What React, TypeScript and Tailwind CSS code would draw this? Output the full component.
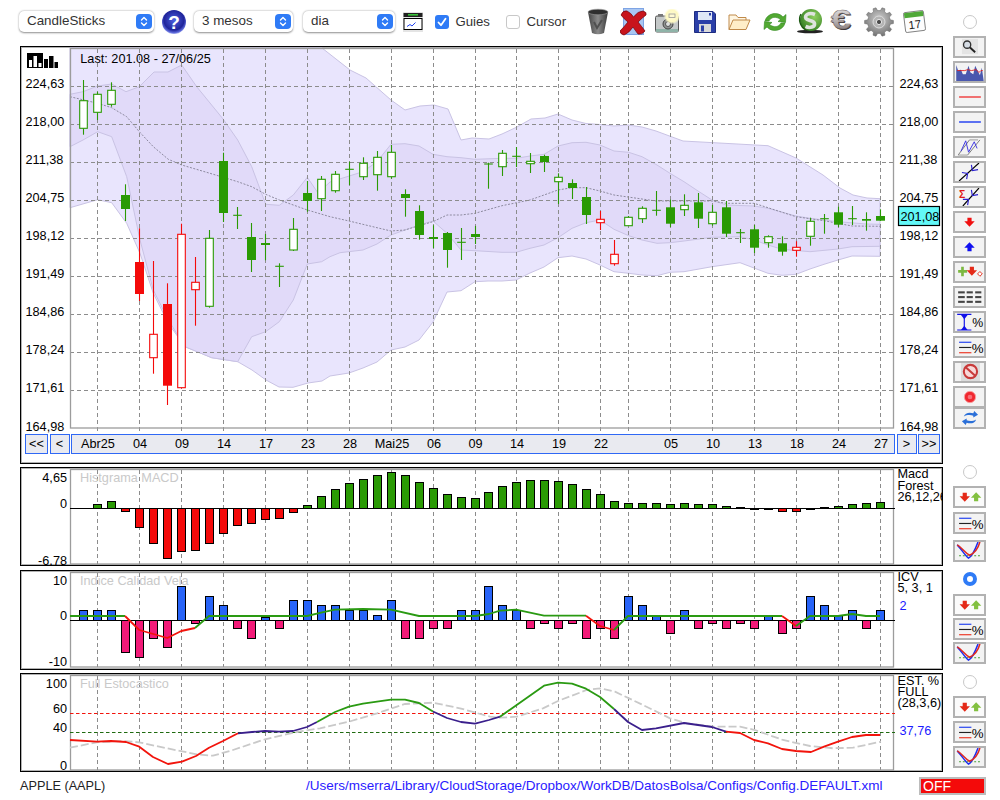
import type { ReactNode } from "react";

type Pt = [number, number];

const line = (pts: Pt[]) => pts.map((p, i) => `${i ? "L" : "M"}${p[0]} ${p[1]}`).join(" ");
const area = (top: Pt[], bottom: Pt[]) => `${line(top)} ${bottom.slice().reverse().map((p) => `L${p[0]} ${p[1]}`).join(" ")} Z`;

// 58 sessions, 14px apart, with the 1px slip the chart has after the 28th one
const barX = (i: number) => (i <= 28 ? 83.5 + 14 * i : 82.5 + 14 * i);
const GRID_X = [97.5, 139.5, 181.5, 223.5, 265.5, 307.5, 349.5, 391.5, 433.5, 475.5, 516.5, 558.5, 600.5, 628.5, 670.5, 712.5, 754.5, 796.5, 838.5, 880.5];
const GRID_Y = [86.5, 124.5, 162.5, 200.5, 238.5, 276.5, 314.5, 352.5, 390.5];
const PRICES = ["224,63", "218,00", "211,38", "204,75", "198,12", "191,49", "184,86", "178,24", "171,61", "164,98"];

// wick top, wick bottom, body top, body bottom, kind (g hollow, G filled, r, R, d doji)
const CANDLES: [number, number, number, number, string][] = [
  [80, 134.7, 100.7, 128.3, "g"], [91.7, 120, 94.3, 112.3, "g"], [82.3, 106.7, 90.3, 104.3, "g"], [184.3, 221, 195, 209, "G"],
  [228.3, 301, 262, 294, "R"], [261, 373.7, 334.3, 357.7, "r"], [283.3, 405, 304, 385.7, "R"], [223.7, 388.3, 234.3, 387.7, "r"],
  [257, 325.7, 282.3, 289.7, "r"], [230, 307.7, 238.3, 306.3, "g"], [152.7, 222, 161, 213, "G"], [207, 229, 215.3, 215.3, "d"],
  [223, 272, 237, 260, "G"], [234, 260.3, 243, 245, "G"], [263.3, 287, 266.3, 266.3, "d"], [218, 251, 229.3, 250, "g"],
  [181, 211.7, 193, 201, "G"], [176, 211, 179.3, 198.7, "g"], [171, 192.7, 174.3, 190.7, "g"], [161.7, 185, 169.3, 169.3, "d"],
  [157.3, 180, 163.3, 176.7, "g"], [151, 190.7, 157.3, 174.7, "g"], [145, 178.7, 152.3, 176.7, "g"], [189.3, 216.7, 194, 198, "G"],
  [205.3, 239.7, 211, 235, "G"], [225.3, 248, 237, 239, "G"], [232, 267.7, 233, 250, "G"], [228, 260, 242.3, 242.3, "d"],
  [226, 244, 234, 237, "G"], [162.7, 188.7, 164, 164, "d"], [150, 176, 153.3, 166.7, "g"], [147, 167, 156.3, 156.3, "d"],
  [153, 173, 161.3, 163.7, "g"], [154.7, 172, 156, 162, "G"], [173.3, 204, 177.3, 181.7, "g"], [179.3, 199, 183, 188, "G"],
  [187, 224, 197, 215, "G"], [211, 230, 219.3, 222.7, "r"], [240, 265.7, 254.3, 263.7, "r"], [216, 225.7, 217.3, 225.7, "g"],
  [206.3, 223, 208.3, 218.7, "g"], [191, 215.7, 210.3, 210.3, "d"], [199.7, 227, 207.3, 223.7, "G"], [194.3, 216, 205.3, 209.7, "g"],
  [193, 228, 202.3, 218.7, "G"], [205, 225.7, 212.3, 223.7, "g"], [201, 237, 207.3, 233.7, "G"], [229, 243, 232.7, 232.7, "d"],
  [225, 253, 229.3, 247.7, "G"], [235.3, 247.7, 236.7, 242.7, "g"], [236.3, 255.7, 243.3, 251.7, "G"], [241.3, 256.7, 247.3, 250.3, "r"],
  [217.7, 245.7, 221.3, 236.3, "g"], [214, 233.7, 218.7, 218.7, "d"], [206.7, 227, 212.3, 224.7, "G"], [206, 225, 218.7, 218.7, "d"],
  [212.3, 230.7, 219, 220.7, "G"], [209.3, 221, 216, 220.7, "G"],
];

const OUTER_TOP: Pt[] = [[70, 48], [322, 48], [350, 70], [366, 78], [391, 100], [405, 110], [420, 106], [434, 105], [448, 109], [461, 140], [472, 138], [489, 139], [502, 134], [517, 127], [531, 119], [545, 118], [558, 114], [572, 120], [586, 123.5], [600, 124.5], [614, 126], [628, 125], [642, 127], [656, 131], [683, 141], [768, 145.7], [796, 158], [823, 175], [840, 188], [853, 195], [867, 198], [880, 198.7]];
const OUTER_BOTTOM: Pt[] = [[70, 207.7], [97.7, 199.7], [111.7, 202.7], [126.7, 223.3], [140, 253.3], [153.3, 293.3], [168.3, 323.3], [185, 346.7], [211.7, 357.7], [237.7, 361.7], [252, 370], [266, 380], [279, 387], [293, 387.3], [308, 383], [322, 381], [330, 376], [349, 373], [363, 368], [377, 362], [391, 350], [405, 347], [419, 340], [433, 322], [447, 292], [461, 290.7], [475, 281.7], [488, 281], [502, 281], [516, 280], [530, 273], [544, 267], [558, 257.7], [572, 256], [586, 259], [600, 265], [614, 271.7], [628.7, 273.3], [642, 275], [657, 275.7], [670, 272.3], [684, 271.7], [712, 266.7], [740, 262.7], [754, 268], [768, 273.3], [782, 275.3], [796, 274.3], [810, 269], [824, 264.3], [838, 260], [852, 256], [880, 256.3]];
const INNER_TOP: Pt[] = [[70, 94.3], [83, 91.7], [97.7, 86], [111.7, 84], [126, 91.7], [139.3, 86.7], [154, 72], [168, 72], [181.7, 65], [196.7, 86.7], [223.3, 119.3], [237.7, 140], [251.7, 166.7], [265.7, 204.3], [279.3, 205.3], [293.3, 195], [307.3, 177.3], [318, 193], [330, 182], [363, 171.7], [377, 161.7], [391, 144.3], [405, 143.7], [419, 146], [433, 154.3], [447, 156.7], [461, 157.7], [475, 159.3], [502, 158.3], [516, 158.3], [530, 156], [544, 154.3], [558, 146], [572, 142.7], [586, 142.3], [600, 145], [614, 151], [628.7, 152.3], [642, 156.7], [657, 165], [670, 173.3], [684, 181.7], [698, 191], [712, 200], [726, 205], [754, 206], [768, 208.3], [796, 216], [810, 218.3], [838, 221.7], [866, 224], [880, 224.3]];
const INNER_BOTTOM: Pt[] = [[70, 146.7], [83, 140], [97.7, 131.7], [111.7, 136.7], [126.7, 176.7], [140, 240], [153.3, 290], [168.3, 320], [185, 346.7], [211.7, 357.7], [237.7, 361.7], [251.7, 336.7], [265.7, 331.7], [279.3, 321.7], [293.3, 300], [307.3, 264], [321.7, 261.7], [330, 256.7], [340, 252.7], [363, 250], [377, 244], [391, 235], [405, 230], [419, 225], [433, 221], [447, 233.3], [461, 250], [475, 250.7], [502, 252.3], [516, 252.3], [530, 248.3], [544, 245], [558, 237.7], [572, 228.3], [586, 222.7], [600, 220], [614, 229.3], [628.7, 235.7], [642, 240], [657, 243.3], [670, 242.7], [684, 241], [712, 237.3], [740, 236.7], [754, 240], [768, 245], [782, 249.3], [810, 251.7], [838, 249], [852, 246.7], [880, 246.3]];
const MID: Pt[] = [[70, 96.7], [97.7, 103.3], [111.7, 107.7], [126.7, 116.7], [139.3, 131.7], [153.3, 146.7], [168.3, 159.3], [181.7, 165], [210, 173.3], [237.7, 181.7], [251.7, 186.7], [265.7, 194.3], [279.3, 200], [307.3, 210], [330, 216.7], [349, 221], [377, 227.7], [391, 231], [405, 230], [419, 225.7], [433, 221.7], [447, 215], [461, 215], [475, 213.3], [502, 205.7], [530, 200], [558, 190], [572, 187.7], [586, 187.7], [600, 191], [614, 195], [642, 199], [656, 201], [712, 201], [726, 203.3], [754, 203.3], [768, 207.7], [796, 216.7], [824, 220.7], [852, 226], [880, 226.3]];

const MACD = [null, 504.3, 501.3, 511.7, 527.7, 543.7, 558.7, 551.7, 550.7, 543.7, 533.7, 525.7, 523.7, 519.7, 518.7, 512.7, 505.3, 496.3, 489.3, 483.3, 479.3, 475.3, 472.3, 475.3, 482.3, 488.3, 494.3, 497.3, 498.3, 492.3, 486.3, 482.3, 480.3, 480.3, 481.3, 484.3, 489.3, 494.3, 501.3, 503.3, 503.3, 503.3, 504.3, 503.3, 504.3, 504.3, 506.3, 507.3, 509.3, 509.3, 511.7, 511.7, 509.3, 507.3, 506.3, 504.3, 503.3, 502.3];
const ICV = [610.3, 610.3, 610.3, 652.3, 657.3, 638.3, 647.3, 586.3, 623.3, 596.3, 605.3, 628.3, 638.3, 617.3, 628.3, 600.3, 600.3, 605.3, 605.3, 610.3, 610.3, 615.3, 600.3, 638.3, 638.3, 628.3, 628.3, 610.3, 610.3, 586.3, 605.3, 610.3, 628.3, 623.3, 628.3, 623.3, 638.3, 628.3, 638.3, 596.3, 605.3, 615, 633.3, 610.3, 628.3, 623.3, 628.3, 623.3, 628.3, 615, 633.3, 628.3, 596.3, 605.3, 615, 610.3, 628.3, 610.3];

const ICV_LINES: { c: string; pts: Pt[] }[] = [
  { c: "#2a9a12", pts: [[70, 616], [125, 616]] },
  { c: "#f2140c", pts: [[125, 616], [139.3, 630], [153.3, 634], [167.3, 638], [181.3, 631], [195, 628]] },
  { c: "#2a9a12", pts: [[195, 628], [209, 616], [307, 616], [321, 612.7], [335, 609.7], [363, 609], [391, 609.7], [419, 616], [475, 616], [489, 614], [500, 610.7], [516, 609.7], [544, 615.7], [586, 615.7]] },
  { c: "#f2140c", pts: [[586, 615.7], [600, 626], [614, 630]] },
  { c: "#2a9a12", pts: [[614, 630], [628, 616], [782, 616]] },
  { c: "#f2140c", pts: [[782, 616], [796, 626]] },
  { c: "#2a9a12", pts: [[796, 626], [810, 616], [838, 616], [852, 614], [866, 616], [880, 616]] },
];

const STOCH_LINES: { c: string; pts: Pt[] }[] = [
  { c: "#f2140c", pts: [[70, 740], [97, 741.7], [111, 741], [126, 742], [139.3, 746.7], [153, 757], [168, 764], [182, 761.7], [196, 756], [209, 747.7], [223, 741], [238, 733.3]] },
  { c: "#3a1f8c", pts: [[238, 733.3], [252, 732], [265, 731], [279, 731.7], [293, 731], [307, 727], [317, 722]] },
  { c: "#2a9a12", pts: [[317, 722], [335, 712], [349, 706.7], [363, 703.7], [377, 701.7], [391, 699.7], [405, 699.7], [419, 703], [433, 711.5]] },
  { c: "#3a1f8c", pts: [[433, 711.5], [447, 718], [461, 722], [475, 723.7], [489, 720], [500, 716.7]] },
  { c: "#2a9a12", pts: [[500, 716.7], [544, 685.7], [558, 682.7], [572, 683.7], [586, 688.7], [600, 697], [614, 709]] },
  { c: "#3a1f8c", pts: [[614, 709], [628, 722], [642, 730], [656, 728.3], [684, 723], [712, 727], [726, 731.7]] },
  { c: "#f2140c", pts: [[726, 731.7], [740, 733], [754, 740], [768, 743.3], [782, 749], [796, 751], [811, 752], [824, 746.7], [838, 741.7], [852, 737], [866, 735], [880, 735]] },
];
const STOCH_SLOW: Pt[] = [[70, 747.7], [96.7, 742.3], [123, 741], [139, 742.3], [167, 748.3], [196.7, 754.3], [213, 755.7], [233, 750], [265, 739.3], [293, 732.7], [320, 728.3], [349, 721.7], [377, 713.3], [405, 704], [433, 702.7], [460, 708.3], [490, 716.7], [500, 717.7], [516.7, 716.7], [543, 708.3], [558, 701], [586.7, 690], [600, 688.3], [615, 691.7], [643, 705], [670, 718.3], [686.7, 723.3], [713, 726.7], [740, 726.7], [755, 730], [783, 740], [810, 746], [833, 748.3], [853, 747.7], [881, 741.7]];

const TICKS: { label: string; w: string }[] = [
  { label: "Abr25", w: "w-[42px]" }, { label: "04", w: "w-[42px]" }, { label: "09", w: "w-[42px]" }, { label: "14", w: "w-[42px]" }, { label: "17", w: "w-[42px]" },
  { label: "23", w: "w-[42px]" }, { label: "28", w: "w-[42px]" }, { label: "Mai25", w: "w-[42px]" }, { label: "06", w: "w-[42px]" }, { label: "09", w: "w-[41px]" },
  { label: "14", w: "w-[42px]" }, { label: "19", w: "w-[42px]" }, { label: "22", w: "w-[42px]" }, { label: "", w: "w-[28px]" }, { label: "05", w: "w-[42px]" },
  { label: "10", w: "w-[42px]" }, { label: "13", w: "w-[42px]" }, { label: "18", w: "w-[42px]" }, { label: "24", w: "w-[42px]" }, { label: "27", w: "w-[42px]" },
];

function gearPath(cx: number, cy: number, r1: number, r2: number, teeth: number) {
  const pts: string[] = [];
  for (let i = 0; i < teeth; i++) {
    const a = (i / teeth) * Math.PI * 2;
    const s = (Math.PI * 2) / teeth;
    [[-0.3, r1], [-0.17, r2], [0.17, r2], [0.3, r1]].forEach(([o, r]) => {
      const t = a + o * s;
      pts.push(`${(cx + Math.cos(t) * r).toFixed(2)} ${(cy + Math.sin(t) * r).toFixed(2)}`);
    });
  }
  return `M${pts.join(" L")} Z`;
}

function Ax({ x, y, children, end, className = "fill-black" }: { x: number; y: number; children: ReactNode; end?: boolean; className?: string }) {
  return (
    <text x={x} y={y} textAnchor={end ? "end" : "start"} className={`text-[12.7px] ${className}`}>
      {children}
    </text>
  );
}

function VGrid({ y1, y2 }: { y1: number; y2: number }) {
  return (
    <g stroke="#8c8c8c" strokeDasharray="4 3">
      {GRID_X.map((x) => (
        <line key={x} x1={x} x2={x} y1={y1} y2={y2} />
      ))}
    </g>
  );
}

function Candle({ x, c }: { x: number; c: (typeof CANDLES)[number] }) {
  const [wt, wb, bt, bb, kind] = c;
  const color = kind === "r" || kind === "R" ? "#f40a0a" : "#2a9a04";
  return (
    <g stroke={color}>
      <line x1={x} x2={x} y1={wt} y2={wb} strokeWidth={1.1} />
      {kind === "d" && <line x1={x - 4.3} x2={x + 4.3} y1={bt} y2={bt} strokeWidth={1.1} />}
      {(kind === "g" || kind === "r") && <rect x={x - 3.8} y={bt} width={7.6} height={bb - bt} fill="#fff" strokeWidth={1.1} />}
      {(kind === "G" || kind === "R") && <rect x={x - 4.5} y={bt} width={9} height={bb - bt} fill={color} stroke="none" />}
    </g>
  );
}

function Bar({ i, y, zero, up, down }: { i: number; y: number; zero: number; up: string; down: string }) {
  const top = Math.floor(y) + 0.5;
  return <rect x={barX(i) - 4} y={Math.min(top, zero)} width={8} height={Math.abs(top - zero)} fill={top > zero ? down : up} stroke="#000" />;
}

function MainChart() {
  return (
    <svg width={921} height={385} viewBox="21 47 921 385" className="block overflow-visible">
      <path d={area(OUTER_TOP, OUTER_BOTTOM)} fill="#e9e5fd" stroke="#c9c3e4" />
      <path d={area(INNER_TOP, INNER_BOTTOM)} fill="#e1daf9" stroke="#c9c3e4" />
      <path d={line(MID)} fill="none" stroke="#8d8a9f" strokeDasharray="2 1.5" />
      <g stroke="#8c8c8c" strokeDasharray="4 3">
        {GRID_Y.map((y) => (
          <line key={y} x1={70} x2={895} y1={y} y2={y} />
        ))}
      </g>
      <VGrid y1={49} y2={431} />
      <rect x={70.5} y={48.5} width={823} height={379.5} fill="none" stroke="#9c9c9c" strokeWidth={1.3} />
      {CANDLES.map((c, i) => (
        <Candle key={i} x={barX(i)} c={c} />
      ))}

      <g fill="#000">
        <rect x={27} y={53} width={16} height={15} />
        <rect x={44} y={59} width={4} height={9} />
        <rect x={49} y={56} width={4.5} height={12} />
        <rect x={54.5} y={62} width={3.5} height={6} />
      </g>
      <g fill="#fff">
        <rect x={29} y={60} width={3} height={7} />
        <rect x={33.5} y={56} width={3.5} height={11} />
        <rect x={38.5} y={63} width={3} height={4} />
      </g>
      <Ax x={80.3} y={63}>Last: 201.08 - 27/06/25</Ax>

      {PRICES.map((p, i) => (
        <Ax key={p} x={25.5} y={i === 9 ? 431 : 88 + 38 * i}>
          {p}
        </Ax>
      ))}
      {PRICES.map((p, i) => (
        <Ax key={p} x={899.5} y={i === 9 ? 431 : 88 + 38 * i}>
          {p}
        </Ax>
      ))}
      <rect x={898.5} y={206.5} width={41} height={19} fill="#62f8f8" stroke="#000" strokeWidth={1.2} />
      <Ax x={900.5} y={221}>201,08</Ax>
    </svg>
  );
}

function MacdChart() {
  return (
    <svg width={921} height={97} viewBox="21 468 921 97" className="block">
      <VGrid y1={470} y2={564} />
      <rect x={70.5} y={469.5} width={823} height={94.5} fill="none" stroke="#9c9c9c" strokeWidth={1.3} />
      <text x={80} y={481.5} className="text-[12.7px] fill-[#c9c9c9]">Histgrama MACD</text>
      {MACD.map((y, i) => (y === null ? null : <Bar key={i} i={i} y={y} zero={508.5} up="#2a9a04" down="#f40a0a" />))}
      <line x1={70} x2={895} y1={508.5} y2={508.5} stroke="#000" />
      <Ax x={67} y={481.5} end>4,65</Ax>
      <Ax x={67} y={507.5} end>0</Ax>
      <Ax x={67} y={564.5} end>-6,78</Ax>
      <Ax x={897.5} y={478}>Macd</Ax>
      <Ax x={897.5} y={489.5}>Forest</Ax>
      <Ax x={897.5} y={500.5}>26,12,26</Ax>
    </svg>
  );
}

function IcvChart() {
  return (
    <svg width={921} height={98} viewBox="21 571 921 98" className="block">
      <VGrid y1={573} y2={667} />
      <rect x={70.5} y={572.5} width={823} height={94.5} fill="none" stroke="#9c9c9c" strokeWidth={1.3} />
      <text x={80} y={585} className="text-[12.7px] fill-[#c9c9c9]">Indice Calidad Vela</text>
      {ICV.map((y, i) => (
        <Bar key={i} i={i} y={y} zero={620.5} up="#2864f8" down="#f21a78" />
      ))}
      <line x1={70} x2={895} y1={620.5} y2={620.5} stroke="#000" />
      {ICV_LINES.map((l, i) => (
        <path key={i} d={line(l.pts)} fill="none" stroke={l.c} strokeWidth={1.8} strokeLinejoin="round" />
      ))}
      <Ax x={67} y={585} end>10</Ax>
      <Ax x={67} y={619.5} end>0</Ax>
      <Ax x={67} y={666} end>-10</Ax>
      <Ax x={897.5} y={581}>ICV</Ax>
      <Ax x={897.5} y={592}>5, 3, 1</Ax>
      <Ax x={899.5} y={610} className="fill-[#1a1aff]">2</Ax>
    </svg>
  );
}

function StochChart() {
  return (
    <svg width={921} height={97} viewBox="21 674 921 97" className="block">
      <VGrid y1={676} y2={770} />
      <rect x={70.5} y={675.5} width={823} height={94.5} fill="none" stroke="#9c9c9c" strokeWidth={1.3} />
      <text x={80} y={687.5} className="text-[12.7px] fill-[#c9c9c9]">Full Estocastico</text>
      <line x1={70} x2={895} y1={713.5} y2={713.5} stroke="#f2140c" strokeDasharray="3.5 2.5" />
      <line x1={70} x2={895} y1={732.5} y2={732.5} stroke="#1f6b10" strokeDasharray="3.5 2.5" />
      <path d={line(STOCH_SLOW)} fill="none" stroke="#c9c9c9" strokeWidth={1.8} strokeDasharray="8 3" />
      {STOCH_LINES.map((l, i) => (
        <path key={i} d={line(l.pts)} fill="none" stroke={l.c} strokeWidth={1.8} strokeLinejoin="round" />
      ))}
      <Ax x={67} y={687.5} end>100</Ax>
      <Ax x={67} y={712.5} end>60</Ax>
      <Ax x={67} y={731.5} end>40</Ax>
      <Ax x={67} y={769.5} end>0</Ax>
      <Ax x={897.5} y={684.5}>EST. %</Ax>
      <Ax x={897.5} y={695.5}>FULL</Ax>
      <Ax x={897.5} y={706.5}>(28,3,6)</Ax>
      <Ax x={899.5} y={734.5} className="fill-[#1a1aff]">37,76</Ax>
    </svg>
  );
}

function Stepper() {
  return (
    <span className="flex h-[15px] w-[16px] items-center justify-center rounded-[4px] bg-[#2f7bf6]">
      <svg width={8} height={11} viewBox="0 0 8 11" fill="none" stroke="#fff" strokeWidth={1.4} strokeLinecap="round" strokeLinejoin="round">
        <path d="M1.5 4 4 1.5 6.5 4M1.5 7 4 9.5 6.5 7" />
      </svg>
    </span>
  );
}

function Select({ label, className }: { label: string; className: string }) {
  return (
    <div className={`flex h-[21px] items-center justify-between rounded-[5px] bg-white pl-[8px] pr-[2px] text-[13.4px] text-[#333] shadow-[0_0.5px_2px_rgba(0,0,0,0.45)] ${className}`}>
      <span>{label}</span>
      <Stepper />
    </div>
  );
}

function HelpIcon() {
  return (
    <svg width={24} height={24} viewBox="0 0 24 24" className="ml-[8px] shrink-0">
      <defs>
        <radialGradient id="helpBlue" cx="0.5" cy="0.42" r="0.58">
          <stop offset="0" stopColor="#4f5fe0" />
          <stop offset="0.72" stopColor="#1f249a" />
          <stop offset="0.9" stopColor="#5a66d8" />
          <stop offset="1" stopColor="#a9b2f0" />
        </radialGradient>
      </defs>
      <circle cx={12} cy={12} r={12} fill="url(#helpBlue)" />
      <text x={12} y={18.5} textAnchor="middle" className="text-[19px] font-bold fill-white">?</text>
    </svg>
  );
}

function ChartIcon() {
  return (
    <svg width={20} height={20} viewBox="0 0 20 20" className="ml-[8px] shrink-0">
      <rect x={0} y={0} width={20} height={20} fill="#e4e4e4" />
      <rect x={0.5} y={1} width={19} height={4} fill="#222" />
      <rect x={5} y={2} width={10} height={1.6} fill="#39c439" />
      <rect x={1} y={6.5} width={18} height={11} fill="#fff" stroke="#000" />
      <path d="M4 14.5 7 12.5 9 14 12.5 10.5" fill="none" stroke="#2040f0" />
    </svg>
  );
}

function Check({ on }: { on: boolean }) {
  return on ? (
    <span className="flex h-[14px] w-[14px] items-center justify-center rounded-[3px] bg-[#2f7bf6]">
      <svg width={10} height={10} viewBox="0 0 10 10" fill="none" stroke="#fff" strokeWidth={1.8} strokeLinecap="round" strokeLinejoin="round">
        <path d="M1.5 5.5 4 8.2 8.5 1.8" />
      </svg>
    </span>
  ) : (
    <span className="h-[14px] w-[14px] rounded-[3px] border border-[#c8c8c8] bg-white" />
  );
}

function TrashIcon() {
  return (
    <svg width={22} height={27} viewBox="0 0 22 27" className="block">
      <defs>
        <linearGradient id="trashG" x1="0" x2="1" y1="0" y2="0">
          <stop offset="0" stopColor="#444" />
          <stop offset="0.5" stopColor="#8a8a8a" />
          <stop offset="1" stopColor="#3a3a3a" />
        </linearGradient>
      </defs>
      <path d="M1 4 5 25Q11 27.5 17 25L21 4Q11 0 1 4Z" fill="url(#trashG)" />
      <ellipse cx={11} cy={4} rx={10} ry={2.8} fill="#2f2f2f" stroke="#999" strokeWidth={0.6} />
      <path d="M7 14 10 20 15 12" fill="none" stroke="#505050" strokeWidth={2} />
    </svg>
  );
}

function CrossIcon() {
  return (
    <svg width={27} height={28} viewBox="0 0 27 28" className="block">
      <rect x={3.5} y={0.5} width={20} height={26} fill="#a9c6f2" stroke="#7ea4e4" />
      <path d="M1 7Q3 2 7 3 11 5 13.5 9 18 3 23 3 27 4 26 7 22 10 18 14 22 19 25 23 22 27 18 26 15 22 13 19 9 25 4 27 0 26 0 23 4 19 8 14 4 11 1 7Z" fill="#c8141c" stroke="#7c0a10" strokeWidth={0.8} />
    </svg>
  );
}

function CameraIcon() {
  return (
    <svg width={27} height={25} viewBox="0 0 27 25" className="block">
      <defs>
        <radialGradient id="glow">
          <stop offset="0" stopColor="#fffbd8" />
          <stop offset="0.7" stopColor="#fdf8c0" />
          <stop offset="1" stopColor="#fffde0" stopOpacity="0" />
        </radialGradient>
      </defs>
      <rect x={0.5} y={7} width={23} height={16} rx={1.5} fill="#c4c8c8" stroke="#555" />
      <rect x={3} y={5} width={5} height={2.5} fill="#777" />
      <rect x={1} y={20} width={22} height={3} fill="#8fb3a8" />
      <circle cx={13} cy={15} r={5} fill="#8e9290" stroke="#444" />
      <circle cx={13} cy={15} r={2.5} fill="#dfe2e0" stroke="#555" />
      <circle cx={17} cy={7} r={8.5} fill="url(#glow)" />
      <rect x={14} y={5} width={6} height={3.5} fill="none" stroke="#999" strokeWidth={0.8} />
    </svg>
  );
}

function FloppyIcon() {
  return (
    <svg width={22} height={22} viewBox="0 0 22 22" className="block">
      <path d="M0.5 0.5H19L21.5 3V21.5H0.5Z" fill="#2b3fa8" stroke="#1e2c80" />
      <rect x={4} y={1} width={14} height={8} fill="#dfe7f6" />
      <rect x={15} y={2} width={2} height={2.5} fill="#2b3fa8" />
      <rect x={5} y={13} width={12} height={8} fill="#d9d9d9" />
      <rect x={7} y={14.5} width={3} height={6} fill="#2b3fa8" />
    </svg>
  );
}

function FolderIcon() {
  return (
    <svg width={23} height={18} viewBox="0 0 23 18" className="block">
      <path d="M1 16.5V2H8L10 4.5H18V7" fill="#fff6e2" stroke="#c08a4a" />
      <path d="M1 16.5 5 7H22L18 16.5Z" fill="#ffeec8" stroke="#c08a4a" />
    </svg>
  );
}

function RefreshIcon() {
  return (
    <svg width={24} height={24} viewBox="0 0 24 24" className="block">
      <path d="M2 11C4 3 15 1 20 7L23 4.5 22.5 12.5 15 11.5 17.5 9.5C13 6 8 7 6 11Z" fill="#52a832" stroke="#2f8a1c" strokeWidth={0.6} />
      <path d="M22 13C20 21 9 23 4 17L1 19.5 1.5 11.5 9 12.5 6.5 14.5C11 18 16 17 18 13Z" fill="#52a832" stroke="#2f8a1c" strokeWidth={0.6} />
    </svg>
  );
}

function MoneyIcon() {
  return (
    <svg width={28} height={25} viewBox="0 0 28 25" className="block">
      <defs>
        <radialGradient id="ball" cx="0.65" cy="0.35" r="0.75">
          <stop offset="0" stopColor="#8fd060" />
          <stop offset="1" stopColor="#2f7a20" />
        </radialGradient>
      </defs>
      <ellipse cx={14} cy={22.5} rx={13} ry={1.8} fill="#222" />
      <circle cx={15} cy={11} r={11} fill="url(#ball)" />
      <path d="M19 5.5C13 3 8 6 10 9.5 11.5 12 18 11 18.5 14.5 19 18 14 19.5 9.5 17.5" fill="none" stroke="#dfe3df" strokeWidth={3.6} />
      <path d="M5 5C2 10 4 18 10 21" fill="none" stroke="#1e5a14" strokeWidth={1.4} />
    </svg>
  );
}

function EuroIcon() {
  return (
    <svg width={26} height={26} viewBox="0 0 26 26" className="block overflow-visible">
      <defs>
        <linearGradient id="silver" x1="0" x2="0" y1="0" y2="1">
          <stop offset="0" stopColor="#e8e8e8" />
          <stop offset="0.55" stopColor="#b8b0b0" />
          <stop offset="1" stopColor="#6a6060" />
        </linearGradient>
      </defs>
      <g transform="scale(1.35 1)">
        <text x={0.6} y={21} className="text-[27px] font-bold" fill="#3f3838">€</text>
        <text x={-0.2} y={20} className="text-[27px] font-bold" fill="url(#silver)" stroke="#6a6060" strokeWidth={0.4}>€</text>
      </g>
    </svg>
  );
}

function GearIcon() {
  return (
    <svg width={30} height={30} viewBox="0 0 30 30" className="block">
      <defs>
        <radialGradient id="gearG" cx="0.5" cy="0.4" r="0.65">
          <stop offset="0" stopColor="#d0d0d0" />
          <stop offset="1" stopColor="#6c6c6c" />
        </radialGradient>
      </defs>
      <path d={gearPath(15, 15, 11.5, 14.5, 10)} fill="url(#gearG)" stroke="#666" strokeWidth={0.5} />
      <circle cx={15} cy={15} r={6} fill="#b4b4b4" stroke="#dcdcdc" strokeWidth={1} />
      <circle cx={15} cy={15} r={2.6} fill="#4a4a4a" stroke="#e8e8e8" />
    </svg>
  );
}

function CalendarIcon() {
  return (
    <svg width={25} height={25} viewBox="0 0 25 25" className="block">
      <g transform="rotate(-7 12.5 12.5)">
        <rect x={2.5} y={2.5} width={20} height={20} rx={1.5} fill="#fdfdfd" stroke="#555" strokeWidth={0.7} />
        <rect x={3} y={3} width={19} height={5} fill="#4fa838" />
        <text x={12.5} y={19.5} textAnchor="middle" className="text-[11.5px] fill-[#222]">17</text>
      </g>
    </svg>
  );
}

function Toolbar() {
  return (
    <div className="-ml-[1px] flex h-[46px] items-center pb-[3px]">
      <Select label="CandleSticks" className="w-[135px]" />
      <HelpIcon />
      <Select label="3 mesos" className="ml-[8px] w-[99px]" />
      <Select label="dia" className="ml-[10px] w-[92px]" />
      <ChartIcon />
      <label className="ml-[12px] mt-[1px] flex items-center gap-[6.5px] text-[13.2px] text-[#333]">
        <Check on />
        Guies
      </label>
      <label className="ml-[16px] mt-[1px] flex items-center gap-[6.5px] text-[13.2px] text-[#333]">
        <Check on={false} />
        Cursor
      </label>
      <div className="ml-[21px] flex items-center">
        <TrashIcon />
        <div className="ml-[11px]"><CrossIcon /></div>
        <div className="ml-[8px]"><CameraIcon /></div>
        <div className="ml-[12px]"><FloppyIcon /></div>
        <div className="ml-[12px]"><FolderIcon /></div>
        <div className="ml-[12px]"><RefreshIcon /></div>
        <div className="ml-[9px]"><MoneyIcon /></div>
        <div className="ml-[7px]"><EuroIcon /></div>
        <div className="ml-[7px]"><GearIcon /></div>
        <div className="ml-[8px]"><CalendarIcon /></div>
      </div>
    </div>
  );
}

function NavBtn({ children, className }: { children: ReactNode; className: string }) {
  return (
    <button className={`flex h-[20px] items-center justify-center border border-[#2f68f5] bg-[#e9eaf0] pt-[1px] text-[12.7px] text-black ${className}`}>
      {children}
    </button>
  );
}

function NavRow() {
  return (
    <div className="mt-[2px] flex h-[20px] items-center gap-[1.5px] pl-[4px]">
      <NavBtn className="w-[23px]">&lt;&lt;</NavBtn>
      <NavBtn className="w-[20px]">&lt;</NavBtn>
      <div className="flex h-[20px] w-[824px] items-center border border-[#2f68f5] bg-[#e9eaf0] pl-[5px] pt-[2px] text-[12.7px] text-black">
        {TICKS.map((t, i) => (
          <span key={i} className={`shrink-0 text-center ${t.w}`}>{t.label}</span>
        ))}
      </div>
      <NavBtn className="w-[20px]">&gt;</NavBtn>
      <NavBtn className="w-[22px]">&gt;&gt;</NavBtn>
    </div>
  );
}

function Radio({ on, className = "" }: { on?: boolean; className?: string }) {
  return on ? (
    <span className={`block h-[14px] w-[14px] rounded-full border-[4px] border-[#2f7bf6] bg-white ${className}`} />
  ) : (
    <span className={`block h-[14px] w-[14px] rounded-full border border-[#c8c8c8] bg-white ${className}`} />
  );
}

function Tool({ children, className = "" }: { children: ReactNode; className?: string }) {
  return (
    <button className={`block h-[22px] w-[33px] shrink-0 border-2 border-[#b2b2b2] bg-[#f3f3f3] p-0 ${className}`}>
      <svg width={29} height={18} viewBox="0 0 30 19" className="block">
        {children}
      </svg>
    </button>
  );
}

const ARROW_DOWN = "M-2.2 -4.5H2.2V-0.8H5.5L0 5 -5.5 -0.8H-2.2Z";
const ARROW_UP = "M-2.2 4.5H2.2V0.8H5.5L0 -5 -5.5 0.8H-2.2Z";

function DownUpTool({ className }: { className: string }) {
  return (
    <Tool className={`bg-[#fbfbfb] ${className}`}>
      <path d={ARROW_DOWN} transform="translate(10 9.5)" fill="#e42a18" />
      <path d={ARROW_UP} transform="translate(22 9.5)" fill="#82c040" />
    </Tool>
  );
}

function PercentTool({ className }: { className: string }) {
  return (
    <Tool className={className}>
      <line x1={4} x2={17} y1={4.5} y2={4.5} stroke="#1c3cf0" strokeWidth={1.2} />
      <line x1={4} x2={17} y1={10} y2={10} stroke="#222" strokeWidth={1.2} />
      <line x1={4} x2={17} y1={15.5} y2={15.5} stroke="#ec5040" strokeWidth={1.4} />
      <text x={17.5} y={15.5} className="text-[14px] fill-black">%</text>
    </Tool>
  );
}

function CurveTool({ className }: { className: string }) {
  return (
    <Tool className={`bg-[#efefef] ${className}`}>
      <line x1={4} x2={28} y1={14.5} y2={14.5} stroke="#3a9a2a" strokeDasharray="2 2" />
      <path d="M2 3C7 8 10 14 14 17 18 15 21 8 24 0" fill="none" stroke="#1c2cf0" strokeWidth={1.6} />
      <path d="M2 3C6 5 10 11 15 14 20 12 24 7 26 0" fill="none" stroke="#e02a20" strokeWidth={1.6} />
    </Tool>
  );
}

function SideColumn() {
  return (
    <div className="ml-[10px] flex w-[33px] flex-col items-center pt-[15px]">
      <Radio />
      <Tool className="mt-[7px]">
        <rect x={7} y={1} width={17} height={16} fill="#e4e4e4" />
        <circle cx={12.5} cy={7} r={3.8} fill="#d5dce4" stroke="#333" strokeWidth={1.4} />
        <line x1={15.5} x2={21} y1={10} y2={15} stroke="#222" strokeWidth={2} />
      </Tool>
      <Tool className="mt-[3px] border-0 bg-[#dfe3f0]">
        <path d="M1 19V2L3 8 6 7 8 12 11 12 14 3 16 10 19 12 21 3 24 9 26 13 28 5 30 19Z" fill="#4a58ae" />
        <path d="M2 8H10L13 7 17 8 22 7 25 10 27 8 29 8" fill="none" stroke="#e01818" strokeWidth={0.9} />
      </Tool>
      <Tool className="mt-[3px]">
        <line x1={4} x2={27} y1={9.5} y2={9.5} stroke="#ee3030" strokeWidth={1.4} />
      </Tool>
      <Tool className="mt-[3px]">
        <line x1={4} x2={27} y1={9.5} y2={9.5} stroke="#1030f0" strokeWidth={1.4} />
      </Tool>
      <Tool className="mt-[3px]">
        <path d="M3 18 15 2M13 18 26 2" fill="none" stroke="#777" />
        <path d="M15 2H24M3 18H13" fill="none" stroke="#9a9a9a" />
        <path d="M6 14 11 3 14 15 20 4 23 11" fill="none" stroke="#3a34e0" />
      </Tool>
      <Tool className="mt-[3px]">
        <line x1={4} x2={25} y1={19} y2={0} stroke="#000" strokeWidth={1.2} />
        <path d="M17 2 18 8 24 7M7 10 13 11 12 17" fill="none" stroke="#2a20d0" strokeWidth={1.2} />
      </Tool>
      <Tool className="mt-[3px]">
        <line x1={8} x2={25} y1={19} y2={0} stroke="#000" strokeWidth={1.2} />
        <path d="M17 2 18 8 24 7M8 12 14 12 13 18" fill="none" stroke="#2a20d0" strokeWidth={1.2} />
        <text x={4} y={11} className="text-[11px] font-bold fill-[#e01818]">Σ</text>
      </Tool>
      <Tool className="mt-[3px]">
        <path d={ARROW_DOWN} transform="translate(15 9.5)" fill="#f01010" />
      </Tool>
      <Tool className="mt-[3px]">
        <path d={ARROW_UP} transform="translate(15 9.5)" fill="#1010f0" />
      </Tool>
      <Tool className="mt-[3px]">
        <path d="M6.2 4H9V7.5H12.5V10.3H9V14H6.2V10.3H3V7.5H6.2Z" fill="#7cb840" />
        <path d={ARROW_DOWN} transform="translate(17.5 8.5)" fill="#e42a18" />
        <path d="M26 9 28.5 11.5 26 14 23.5 11.5Z" fill="#fff" stroke="#e42a18" />
      </Tool>
      <Tool className="mt-[3px]">
        <g fill="#444">
          <rect x={3} y={3.5} width={7} height={2.2} />
          <rect x={12} y={3.5} width={6.5} height={2.2} />
          <rect x={21} y={3.5} width={6.5} height={2.2} />
          <rect x={3} y={8.5} width={7} height={2.2} />
          <rect x={12} y={8.5} width={6.5} height={2.2} />
          <rect x={21} y={8.5} width={6.5} height={2.2} />
          <rect x={3} y={13.5} width={7} height={2.2} />
          <rect x={12} y={13.5} width={6.5} height={2.2} />
          <rect x={21} y={13.5} width={6.5} height={2.2} />
        </g>
      </Tool>
      <Tool className="mt-[3px]">
        <path d="M2 1.5H17M2 18H17M9.5 2V18" fill="none" stroke="#1010e8" strokeWidth={1.2} />
        <path d="M6 2H13L9.5 6.5ZM6 18H13L9.5 13.5Z" fill="#1010e8" />
        <text x={18} y={15} className="text-[13px] fill-black">%</text>
      </Tool>
      <PercentTool className="mt-[3px]" />
      <Tool className="mt-[3px]">
        <rect x={6} y={0} width={20} height={19} fill="#dcdcdc" />
        <circle cx={16} cy={9} r={7} fill="#f8d8d8" stroke="#c83a3a" strokeWidth={2.2} />
        <line x1={11} x2={21} y1={4.5} y2={13.5} stroke="#c83a3a" strokeWidth={2.2} />
      </Tool>
      <Tool className="mt-[3px]">
        <circle cx={15.5} cy={9.5} r={6} fill="#f02830" stroke="#f8a0a0" />
        <circle cx={15.5} cy={9.5} r={2.5} fill="#f87078" />
      </Tool>
      <Tool className="-mt-[1px]">
        <path d="M9 8C10 4 15 3 19 4.5L20 2 24 6 19 9 19 7C16 6 12 6 9 8Z" fill="#2a6fd8" />
        <path d="M22 11C21 15 16 16 12 14.5L11 17 7 13 12 10 12 12C15 13 19 13 22 11Z" fill="#2a6fd8" />
      </Tool>

      <Radio className="mt-[36px]" />
      <DownUpTool className="mt-[7px]" />
      <PercentTool className="mt-[4px]" />
      <CurveTool className="mt-[6px]" />

      <Radio on className="mt-[10px]" />
      <DownUpTool className="mt-[8px]" />
      <PercentTool className="mt-[2px]" />
      <CurveTool className="mt-[2px]" />

      <Radio className="mt-[11px]" />
      <DownUpTool className="mt-[7px]" />
      <PercentTool className="mt-[3px]" />
      <CurveTool className="mt-[3px]" />
    </div>
  );
}

const PANEL = "border border-black shadow-[inset_0_0_0_1px_rgba(0,0,0,0.3)]";

export default function App() {
  return (
    <div className="flex h-[800px] w-[1000px] flex-col overflow-hidden bg-white font-['Liberation_Sans',sans-serif]">
      <div className="flex pl-[20px]">
        <div className="w-[923px]">
          <Toolbar />
          <div className={`h-[418px] ${PANEL}`}>
            <MainChart />
            <NavRow />
          </div>
          <div className={`mt-[3px] h-[99px] ${PANEL}`}>
            <MacdChart />
          </div>
          <div className={`mt-[4px] h-[100px] ${PANEL}`}>
            <IcvChart />
          </div>
          <div className={`mt-[3px] h-[99px] ${PANEL}`}>
            <StochChart />
          </div>
        </div>
        <SideColumn />
      </div>
      <div className="flex items-center pl-[20px] pt-[4px]">
        <span className="w-[286px] text-[12.7px] text-[#222]">APPLE (AAPL)</span>
        <span className="text-[13.5px] text-[#2a1aff]">/Users/mserra/Library/CloudStorage/Dropbox/WorkDB/DatosBolsa/Configs/Config.DEFAULT.xml</span>
        <span className="ml-auto mr-[14px] flex h-[18px] w-[67px] items-center border-2 border-[#bcbcbc] bg-[#f40a0a] pl-[2px] text-[14px] text-white">OFF</span>
      </div>
    </div>
  );
}
